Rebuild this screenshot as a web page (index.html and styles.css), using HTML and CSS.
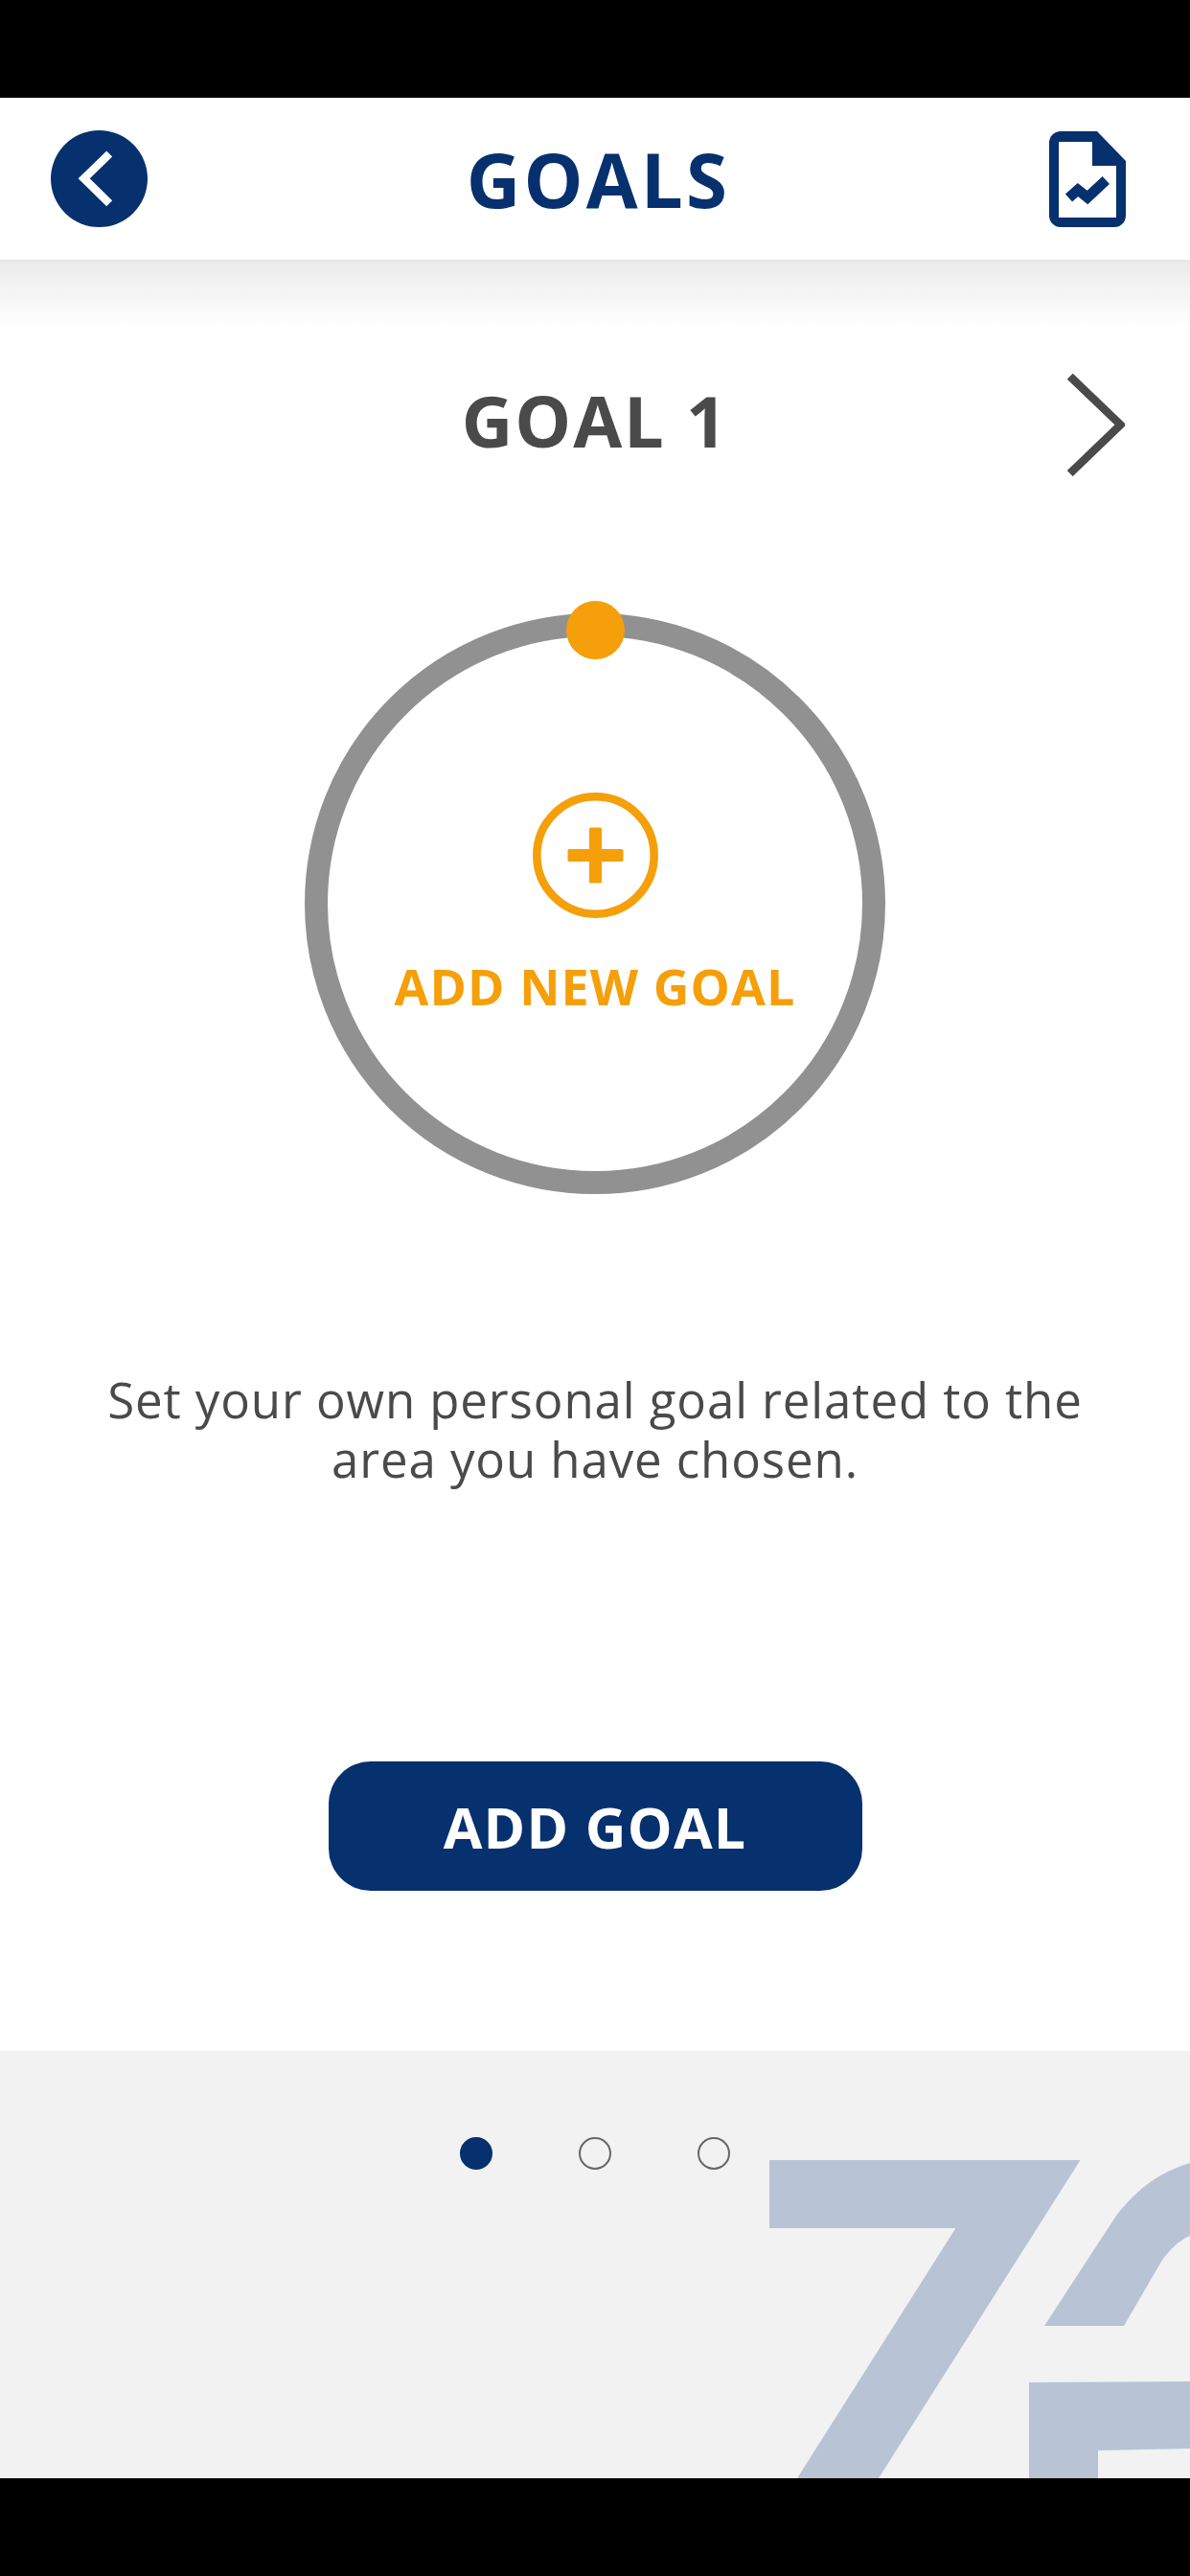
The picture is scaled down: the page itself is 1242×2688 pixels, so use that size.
FILE: index.html
```html
<!DOCTYPE html>
<html lang="en">
<head>
  <meta charset="UTF-8" />
  <meta name="viewport" content="width=device-width, initial-scale=1.0" />
  <title>Goals</title>
  <link rel="stylesheet" href="styles.css">
</head>
<body>
  <div class="screen">
    <div class="black-bar top-bar"></div>

    <header class="header">
      <button class="back-btn" aria-label="Back">
        <svg viewBox="0 0 101 101" width="101" height="101">
          <circle cx="50.5" cy="50.5" r="50.5" fill="#07306f" />
          <polyline points="61.2,24.5 34.7,50.3 61.2,76.2" fill="none" stroke="#fff" stroke-width="8.5" />
        </svg>
      </button>
      <h1 class="page-title">GOALS</h1>
      <button class="report-btn" aria-label="Report">
        <svg viewBox="0 0 80 100" width="80" height="100">
          <path d="M12 0H50L80 31V88a12 12 0 0 1-12 12H12A12 12 0 0 1 0 88V12A12 12 0 0 1 12 0Z" fill="#07306f" />
          <polygon points="10,11 45,11 45,36 70,36 70,90 10,90" fill="#fff" />
          <polyline points="20.5,69.6 30,61 40,69 59.3,51" fill="none" stroke="#07306f" stroke-width="10.8" />
        </svg>
      </button>
    </header>
    <div class="header-shadow"></div>

    <main class="content">
      <div class="goal-row">
        <span></span>
        <h2 class="goal-title">GOAL 1</h2>
        <button class="next-btn" aria-label="Next goal">
          <svg viewBox="0 0 61 107" width="61" height="107">
            <polyline points="3.7,2.7 56.5,53.3 3.7,104" fill="none" stroke="#4a4a4a" stroke-width="8.5" />
          </svg>
        </button>
      </div>

      <div class="ring">
        <span class="ring-dot"></span>
        <span class="plus-icon">
          <svg viewBox="0 0 131 131" width="131" height="131">
            <circle cx="65.5" cy="65.5" r="61.2" fill="none" stroke="#f59f0a" stroke-width="8.5" />
            <rect x="36.5" y="59" width="58" height="13" rx="1.5" fill="#f59f0a" />
            <rect x="59" y="36.5" width="13" height="58" rx="1.5" fill="#f59f0a" />
          </svg>
        </span>
        <span class="ring-label">ADD NEW GOAL</span>
      </div>

      <p class="description">Set your own personal goal related to the<br>area you have chosen.</p>

      <button class="add-btn">ADD GOAL</button>
    </main>

    <footer class="footer">
      <svg class="watermark" viewBox="0 0 1242 446" width="1242" height="446">
        <g fill="#b8c3d5">
          <polygon points="803,114 1127.5,114 917,446 832,446 997.5,185 803,185" />
          <path d="M1242 117C1205 128 1182 150 1165 172L1090 287H1173L1212 220C1220 208 1230 198 1242 193Z" />
          <polygon points="1074,346 1242,345 1242,415 1146,417 1146,446 1074,446" />
        </g>
      </svg>
      <div class="pager">
        <span class="pager-dot active"></span>
        <span class="pager-dot"></span>
        <span class="pager-dot"></span>
      </div>
    </footer>

    <div class="black-bar bottom-bar"></div>
  </div>
</body>
</html>
```

FILE: styles.css
```css
:root {
  --navy: #07306f;
  --orange: #f59f0a;
  --text: #4a4a4a;
  --ring: #919191;
  --footer-bg: #f2f2f2;
}
* { box-sizing: border-box; margin: 0; padding: 0; }
body {
  background: #000;
  font-family: 'Open Sans', sans-serif;
  color: var(--text);
}
button {
  border: none;
  background: none;
  font-family: inherit;
  cursor: pointer;
}
svg { display: block; }
.screen {
  width: 1242px; height: 2688px;
  display: flex; flex-direction: column;
  background: #fff;
  overflow: hidden;
}
.black-bar { background: #000; height: 102px; flex: none; }

.header {
  height: 169px; flex: none;
  padding: 0 67px 0 53px;
  display: flex; align-items: center; justify-content: space-between;
  background: #fff;
}
.page-title {
  font-size: 78px; font-weight: 700;
  letter-spacing: 3.2px;
  color: var(--navy);
  line-height: 1;
}
.header-shadow {
  height: 72px; flex: none;
  background: linear-gradient(#e4e4e4, #ebebeb 3px, #fff);
}

.content {
  flex: 1;
  display: flex; flex-direction: column; align-items: center;
  padding-top: 47px;
}
.goal-row {
  width: 100%; height: 107px;
  padding: 0 68px;
  display: grid; grid-template-columns: 1fr auto 1fr; align-items: center;
}
.goal-title {
  font-size: 74px; font-weight: 700;
  letter-spacing: 1.9px;
  line-height: 1;
  padding-bottom: 10px;
}
.next-btn { justify-self: end; }

.ring {
  position: relative;
  width: 606px; height: 606px;
  margin-top: 143px;
  border: 24px solid var(--ring);
  border-radius: 50%;
  display: flex; flex-direction: column; align-items: center;
  padding-top: 163px;
}
.ring-dot {
  position: absolute;
  top: -37px; left: 249px;
  width: 61px; height: 61px;
  border-radius: 50%;
  background: var(--orange);
}
.ring-label {
  margin-top: 35px;
  font-size: 52px; font-weight: 700;
  letter-spacing: 1.1px;
  line-height: 71px;
  color: var(--orange);
  white-space: nowrap;
}
.description {
  margin-top: 183px;
  font-size: 51px; line-height: 62px;
  letter-spacing: 0.9px;
  text-align: center;
}
.add-btn {
  margin-top: 285px;
  width: 557px; height: 135px;
  border-radius: 44px;
  background: var(--navy);
  color: #fff;
  font-size: 59px; font-weight: 700;
  letter-spacing: 1.2px;
}

.footer {
  position: relative;
  height: 446px; flex: none;
  background: var(--footer-bg);
  padding-top: 90px;
}
.watermark { position: absolute; top: 0; left: 0; }
.pager {
  position: relative;
  display: flex; justify-content: center; gap: 90px;
}
.pager-dot {
  width: 34px; height: 34px;
  border-radius: 50%;
  border: 2px solid #666;
}
.pager-dot.active { background: var(--navy); border-color: var(--navy); }
```
